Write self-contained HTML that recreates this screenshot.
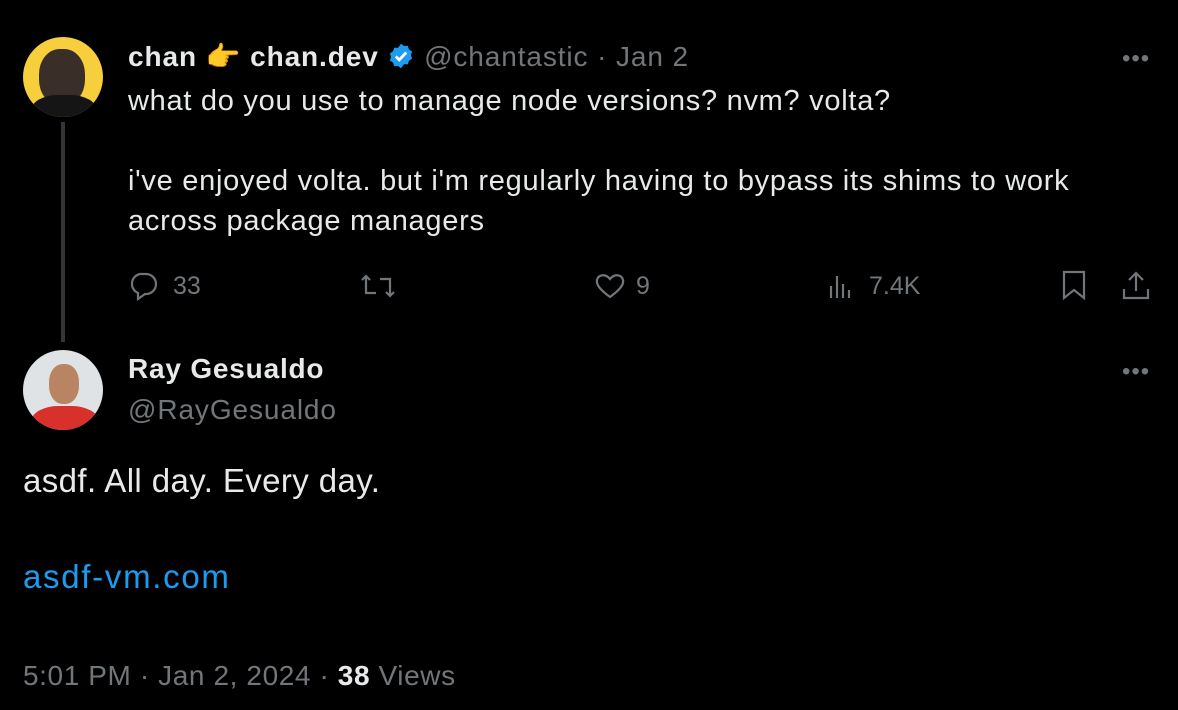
<!DOCTYPE html>
<html><head><style>
body{margin:0;width:1178px;height:710px;background:#000;font-family:"Liberation Sans",sans-serif;color:#e7e9ea;position:relative;overflow:hidden}
.a{position:absolute;white-space:nowrap}
.g{color:#71767b}
.ic{position:absolute;stroke:#71767b;fill:none;stroke-width:2.2}
</style></head><body>
<div class="a" style="left:23px;top:37px;width:80px;height:80px;border-radius:50%;background:#f7cf3d;overflow:hidden">
 <div style="position:absolute;left:16px;top:12px;width:46px;height:56px;border-radius:45%;background:#3a2e28"></div>
 <div style="position:absolute;left:8px;top:58px;width:66px;height:40px;border-radius:40%;background:#151515"></div>
</div>
<div class="a" style="left:61px;top:122px;width:4px;height:220px;background:#333639"></div>
<div class="a" style="left:128px;top:39px;font-size:28px;line-height:36px;letter-spacing:0.9px"><b>chan</b> <span style="color:#f5c343">👉</span> <b>chan.dev</b>
<svg width="28" height="28" viewBox="0 0 24 24" style="vertical-align:-4px"><path fill="#1d9bf0" d="M12 1.5l2.6 1.9 3.2-.2 1 3.1 2.7 1.8-1 3.1 1 3.1-2.7 1.8-1 3.1-3.2-.2L12 22.5l-2.6-1.9-3.2.2-1-3.1-2.7-1.8 1-3.1-1-3.1 2.7-1.8 1-3.1 3.2.2z"/><path d="M7.5 12.3l3 3 6-6.3" stroke="#fff" stroke-width="2.4" fill="none"/></svg>
<span class="g">@chantastic · Jan 2</span></div>
<div class="a" style="left:1122px;top:45px;font-size:24px;color:#71767b;letter-spacing:1px">•••</div>
<div class="a" style="left:128px;top:81px;font-size:29px;line-height:40px;letter-spacing:0.72px">what do you use to manage node versions? nvm? volta?<br><br>i've enjoyed volta. but i'm regularly having to bypass its shims to work<br>across package managers</div>

<svg class="ic" style="left:128px;top:270px" width="36" height="32" viewBox="0 0 36 32"><path d="M12 4h6a10 10 0 0 1 0 20h-1l-7 5v-6A10 10 0 0 1 12 4z"/></svg>
<div class="a g" style="left:173px;top:272px;font-size:25px">33</div>
<svg class="ic" style="left:358px;top:272px" width="40" height="30" viewBox="0 0 40 30"><path d="M4 8l4-4 4 4M8 4v17h10M36 20l-4 4-4-4M32 24V7H22"/></svg>
<svg class="ic" style="left:594px;top:272px" width="32" height="28" viewBox="0 0 32 28"><path d="M16 25C5 17 2 12 3 8c1-5 8-7 13-1 5-6 12-4 13 1 1 4-2 9-13 17z"/></svg>
<div class="a g" style="left:636px;top:272px;font-size:25px">9</div>
<svg class="ic" style="left:826px;top:272px" width="32" height="28" viewBox="0 0 32 28"><path d="M5 26V14M11 26V4M17 26V12M23 26V18"/></svg>
<div class="a g" style="left:869px;top:272px;font-size:25px">7.4K</div>
<svg class="ic" style="left:1058px;top:269px" width="32" height="32" viewBox="0 0 32 32"><path d="M6 3h20v26l-10-8-10 8z"/></svg>
<svg class="ic" style="left:1120px;top:269px" width="32" height="32" viewBox="0 0 32 32"><path d="M16 4v18M9 11l7-7 7 7M4 20v9h24v-9"/></svg>

<div class="a" style="left:23px;top:350px;width:80px;height:80px;border-radius:50%;background:#dfe3e6;overflow:hidden">
 <div style="position:absolute;left:26px;top:14px;width:30px;height:40px;border-radius:45%;background:#b88462"></div>
 <div style="position:absolute;left:8px;top:56px;width:68px;height:40px;border-radius:40%;background:#d8302b"></div>
</div>
<div class="a" style="left:128px;top:353px;font-size:28px;font-weight:bold;letter-spacing:0.8px">Ray Gesualdo</div>
<div class="a g" style="left:128px;top:394px;font-size:28px;letter-spacing:0.9px">@RayGesualdo</div>
<div class="a" style="left:1122px;top:358px;font-size:24px;color:#71767b;letter-spacing:1px">•••</div>
<div class="a" style="left:23px;top:462px;font-size:33px;letter-spacing:0.4px">asdf. All day. Every day.</div>
<div class="a" style="left:23px;top:558px;font-size:33px;color:#1d9bf0;letter-spacing:1.7px">asdf-vm.com</div>
<div class="a g" style="left:23px;top:660px;font-size:28px;letter-spacing:0.6px">5:01 PM · Jan 2, 2024 · <b style="color:#e7e9ea">38</b> Views</div>
</body></html>
